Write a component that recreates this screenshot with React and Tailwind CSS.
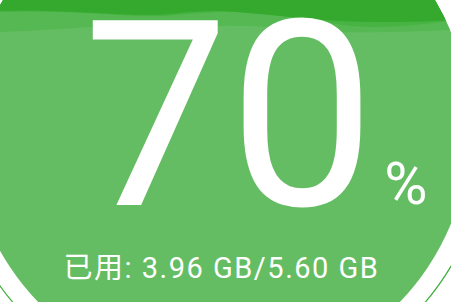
import React from "react";

function Gauge() {
  return (
    <svg
      className="absolute inset-0"
      width="451"
      height="302"
      viewBox="0 0 451 302"
      aria-hidden="true"
    >
      <defs>
        <clipPath id="inner">
          <circle cx="219" cy="128" r="251" />
        </clipPath>
      </defs>
      <circle cx="219" cy="128" r="270" fill="none" stroke="#3fae38" strokeWidth="1.2" />
      <g clipPath="url(#inner)">
        <rect x="0" y="0" width="451" height="302" fill="#64bd62" />
        <path
          d="M0,0 H451 V30 C420,31 380,33 340,32 C300,30 260,25 221,26 C180,27 160,24 130,25 C80,27 40,31 0,32 Z"
          fill="#55b852"
        />
        <path
          d="M0,0 H451 V21 C430,23 410,26 380,27 C350,28 330,22 300,18 C270,14 250,11 221,12 C190,13 170,17 140,16 C100,14 60,10 0,12 Z"
          fill="#46b342"
        />
        <path
          d="M0,0 H451 V20 C420,22 380,23 340,21 C300,19 260,13 221,11 C190,10 170,16 140,15 C100,14 60,10 0,11 Z"
          fill="#34a92e"
        />
      </g>
    </svg>
  );
}

export default function App() {
  return (
    <div className="relative w-[451px] h-[302px] overflow-hidden bg-white">
      <Gauge />
      <div className="relative flex flex-col items-center text-white font-['Roboto','Noto_Sans_CJK_SC',sans-serif]">
        <div className="relative ml-[7px] text-[260px] leading-[232px] font-normal">
          70
          <span className="absolute left-full top-[154px] ml-[9px] text-[59px] leading-none">%</span>
        </div>
        <div className="mt-[22px] mr-[8px] text-[29px] leading-[29px] tracking-[1.5px] font-normal">
          已用: 3.96 GB/5.60 GB
        </div>
      </div>
    </div>
  );
}
